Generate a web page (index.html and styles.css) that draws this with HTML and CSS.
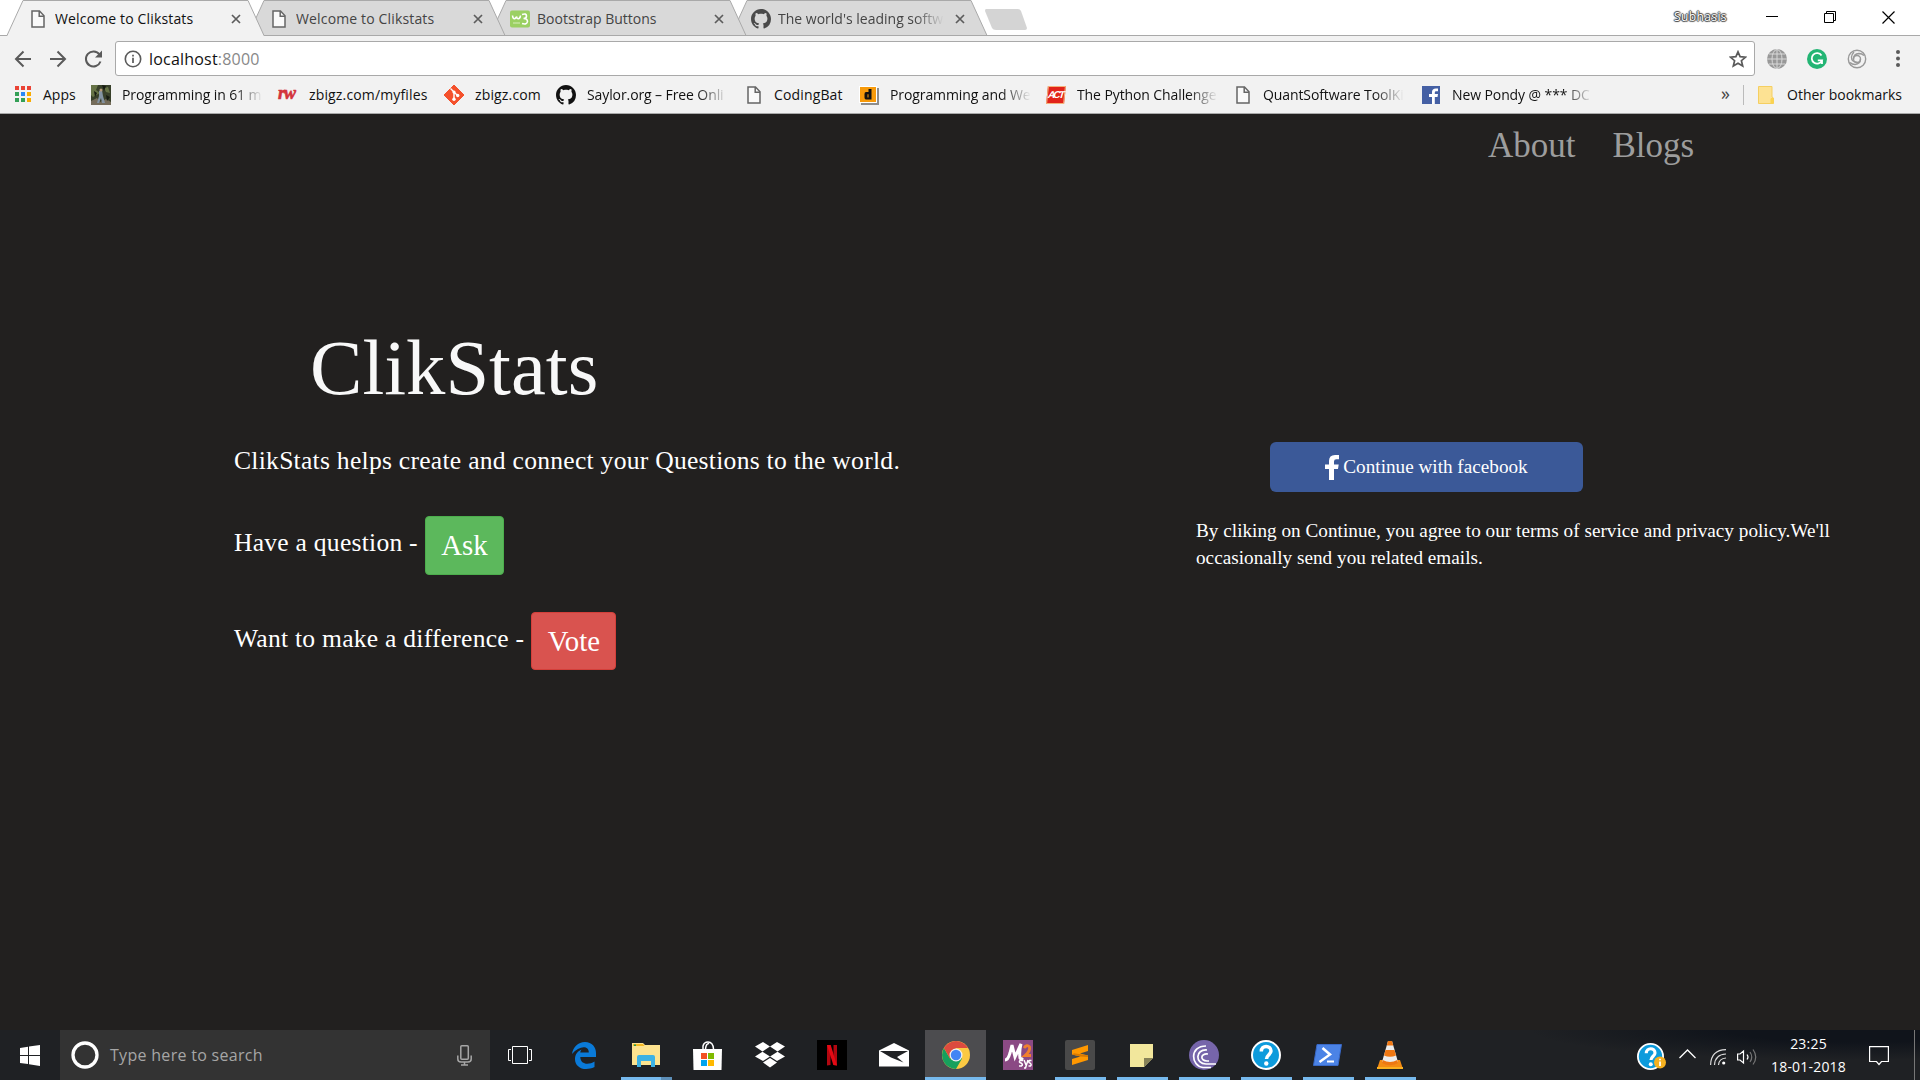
FILE: index.html
```html
<!DOCTYPE html>
<html lang="en">
<head>
<meta charset="utf-8">
<title>Welcome to Clikstats</title>
<link rel="stylesheet" href="styles.css">
</head>
<body>
<svg class="defs" width="0" height="0">
  <symbol id="doc" viewBox="0 0 14 18"><path d="M1 1H8.5L13 5.8V17H1Z" fill="#fafafa" stroke="currentColor" stroke-width="1.5"/><path d="M8.2 1V6.2H13" fill="none" stroke="currentColor" stroke-width="1.5"/></symbol>
  <symbol id="close" viewBox="0 0 10 10"><path d="M1 1L9 9M9 1L1 9" stroke="currentColor" stroke-width="1.7"/></symbol>
  <symbol id="github" viewBox="0 0 16 16"><path fill="currentColor" d="M8 0C3.58 0 0 3.58 0 8c0 3.54 2.29 6.53 5.47 7.59.4.07.55-.17.55-.38 0-.19-.01-.82-.01-1.49-2.01.37-2.53-.49-2.69-.94-.09-.23-.48-.94-.82-1.13-.28-.15-.68-.52-.01-.53.63-.01 1.08.58 1.23.82.72 1.21 1.87.87 2.33.66.07-.52.28-.87.51-1.07-1.78-.2-3.64-.89-3.64-3.95 0-.87.31-1.59.82-2.15-.08-.2-.36-1.02.08-2.12 0 0 .67-.21 2.2.82.64-.18 1.32-.27 2-.27s1.36.09 2 .27c1.53-1.04 2.2-.82 2.2-.82.44 1.1.16 1.92.08 2.12.51.56.82 1.27.82 2.15 0 3.07-1.87 3.75-3.65 3.95.29.25.54.73.54 1.48 0 1.07-.01 1.93-.01 2.2 0 .21.15.46.55.38A8.01 8.01 0 0 0 16 8c0-4.42-3.58-8-8-8z"/></symbol>
  <symbol id="question" viewBox="0 0 30 30"><circle cx="15" cy="15" r="14" fill="#0d9bdc" stroke="#fff" stroke-width="2"/><path d="M10.300 11.500C10.300 4.500 20 5 20 11C20 14.500 15.500 15 15.500 19" fill="none" stroke="#fff" stroke-width="3.500"/><circle cx="15.300" cy="23.500" r="2.200" fill="#fff"/></symbol>
</svg>

<header class="browser">
  <div class="tabstrip">
    <svg class="tab-shapes" width="1040" height="36" viewBox="0 0 1040 36">
      <path d="M731 35.500L747 .5H971L987 35.500Z" fill="#d9d9d9" stroke="#a9a9a9"/>
      <path d="M490 35.500L506 .5H730L746 35.500Z" fill="#d9d9d9" stroke="#a9a9a9"/>
      <path d="M248 35.500L264 .5H489L505 35.500Z" fill="#d9d9d9" stroke="#a9a9a9"/>
      <path d="M0 35.500H1040" stroke="#a9a9a9"/>
      <path d="M7 36L23 .5H248L264 36Z" fill="#f2f2f2"/>
      <path d="M7 35.500L23 .5H248L264 35.500" fill="none" stroke="#a9a9a9"/>
      <path d="M986 9H1018Q1020 9 1021 11L1027 28Q1027 30 1025 30H996Q993 30 992 28L985 11Q985 9 986 9Z" fill="#d4d4d4"/>
    </svg>
    <div class="tabs">
      <div class="tab active"><svg class="tab-icon doc-icon"><use href="#doc"/></svg><span class="tab-title airy">Welcome to Clikstats</span><svg class="tab-close"><use href="#close"/></svg></div>
      <div class="tab"><svg class="tab-icon doc-icon"><use href="#doc"/></svg><span class="tab-title airy">Welcome to Clikstats</span><svg class="tab-close"><use href="#close"/></svg></div>
      <div class="tab"><svg class="tab-icon wide" viewBox="0 0 20 17"><rect width="20" height="17" rx="2" fill="#9bd063"/><path d="M2.500 5Q3 9 5 8Q6.500 7 6.500 6Q7 9 9 8Q10.500 7 10.500 5M12 4Q16.500 2.500 16.500 5.500Q16.500 8 13.500 8Q17.500 8 17.500 11Q17 14.500 12 13" fill="none" stroke="#fff" stroke-width="1.600"/><path d="M3 12.500H10" stroke="#d7efbc"/></svg><span class="tab-title">Bootstrap Buttons</span><svg class="tab-close"><use href="#close"/></svg></div>
      <div class="tab"><svg class="tab-icon wide gh"><use href="#github"/></svg><span class="tab-title fade">The world's leading software</span><svg class="tab-close"><use href="#close"/></svg></div>
    </div>
    <div class="window-controls">
      <span class="profile">Subhasis</span>
      <svg width="12" height="12"><path d="M0 5.500H12" stroke="#000"/></svg>
      <svg width="12" height="12"><path d="M.5 2.500H9.500V11.500H.5ZM2.500 2V.5H11.500V9.500H10" fill="none" stroke="#000"/></svg>
      <svg width="13" height="13"><path d="M.5 .5L12.500 12.500M12.500 .5L.5 12.500" stroke="#000" stroke-width="1.200"/></svg>
    </div>
  </div>

  <div class="toolbar">
    <svg class="nav-icons" width="107" height="34" viewBox="0 0 107 34" fill="none" stroke="#5a5a5a" stroke-width="2">
      <path d="M31 17H16M23.500 9.500L16 17L23.500 24.500M50 17H65M57.500 9.500L65 17L57.500 24.500"/>
      <path d="M99.500 12.500A7.500 7.500 0 1 0 100.500 19.500"/><path d="M102 8.500V15.500H95Z" fill="#5a5a5a" stroke="none"/>
    </svg>
    <div class="omnibox">
      <svg width="18" height="18" viewBox="0 0 18 18"><circle cx="9" cy="9" r="7.700" fill="none" stroke="#5a5a5a" stroke-width="1.600"/><path d="M9 7.700V13M9 4.800V6.500" stroke="#5a5a5a" stroke-width="1.700"/></svg>
      <span class="url">localhost<span class="port">:8000</span></span>
      <svg class="star" width="18" height="18" viewBox="0 0 18 18"><path d="M9 1.800L11.100 6.600L16.500 7.100L12.400 10.700L13.700 16L9 13.200L4.300 16L5.600 10.700L1.500 7.100L6.900 6.600Z" fill="none" stroke="#5a5a5a" stroke-width="1.700"/></svg>
    </div>
    <div class="extensions">
      <svg width="20" height="20" viewBox="0 0 20 20"><circle cx="10" cy="10" r="10" fill="#989898"/><g fill="none" stroke="#d8d8d8" stroke-width="1"><ellipse cx="10" cy="10" rx="5" ry="9.500"/><path d="M10 0V20M0 10H20M2 5H18M2 15H18"/></g></svg>
      <svg width="20" height="20" viewBox="0 0 20 20"><circle cx="10" cy="10" r="10" fill="#23b574"/><path d="M14.500 6.500A5.300 5.300 0 1 0 15 11.300H10.800M15 11.300V15" fill="none" stroke="#fff" stroke-width="1.800"/></svg>
      <svg width="20" height="20" viewBox="0 0 20 20" fill="none" stroke="#999" stroke-width="1.400"><circle cx="10" cy="10" r="8.700"/><circle cx="10" cy="10" r="3.500"/><path d="M6.500 10Q6.500 5 12 4.500Q15 4.500 17 6.500M13.500 10Q13.500 15 8 15.500Q5 15.500 3 13.500M10 13.500Q4.500 13 4.500 8Q5 5 7 3"/></svg>
      <svg width="4" height="17" viewBox="0 0 4 17" fill="#5a5a5a"><circle cx="2" cy="2" r="2"/><circle cx="2" cy="8.500" r="2"/><circle cx="2" cy="15" r="2"/></svg>
    </div>
  </div>

  <div class="bookmarks">
    <div class="bm apps"><svg viewBox="0 0 20 20"><g fill="#ea4335"><path d="M0 1h4v4H0zM6 1h4v4H6zM12 1h4v4h-4z"/></g><path d="M0 7h4v4H0zM0 13h4v4H0zM6 13h4v4H6z" fill="#34a057"/><path d="M6 7h4v4H6z" fill="#2a87f5"/><path d="M12 7h4v4h-4zM12 13h4v4h-4z" fill="#f9ab00"/></svg><span>Apps</span></div>
    <div class="bm fade"><svg viewBox="0 0 20 20"><path d="M0 0H20V20H0Z" fill="#38402a"/><path d="M0 0H7L5 5L9 8L2 12L0 10ZM13 3L17 2L19 8L15 7Z" fill="#667346"/><path d="M0 16L6 13L9 17L15 14L20 17V20H0Z" fill="#756d5b"/><path d="M11 0L15 1L13 6ZM3 6L6 8L4 12ZM15 10L19 12L16 16Z" fill="#171b12"/><path d="M8 6L11 5L12 11L14 18H11L10 13L8 18H6L8 11Z" fill="#8393a2"/><circle cx="10" cy="5" r="1.500" fill="#b69a7a"/></svg><span>Programming in 61 m</span></div>
    <div class="bm"><i class="rw">rw</i><span class="airy">zbigz.com/myfiles</span></div>
    <div class="bm"><svg viewBox="0 0 20 20"><path d="M10 0L20 10L10 20L0 10Z" fill="#f4512c" stroke="#f4512c" stroke-linejoin="round"/><path d="M6.500 3.500L10 7V14M10 7L13.500 10.500" fill="none" stroke="#fff" stroke-width="1.400"/><g fill="#fff"><circle cx="10" cy="7" r="1.600"/><circle cx="10" cy="14.300" r="1.700"/><circle cx="13.700" cy="10.500" r="1.700"/></g></svg><span class="airy">zbigz.com</span></div>
    <div class="bm fade gh-dark"><svg><use href="#github"/></svg><span>Saylor.org – Free Onli</span></div>
    <div class="bm doc-bm"><svg><use href="#doc"/></svg><span class="airy">CodingBat</span></div>
    <div class="bm fade"><svg viewBox="0 0 20 20"><path d="M2 3H20V20H2Z" fill="#8d8d8d"/><path d="M0 1H18V18H0Z" fill="#fff"/><path d="M1 2H17V17H1Z" fill="#f79a0a"/><path d="M9.500 4H12.500V14.500H9.500ZM9.500 7H7Q5.500 7 5.500 9V12.500Q5.500 14.500 7 14.500H9.500V12.500H8.500V9.200H9.500Z" fill="#111"/></svg><span>Programming and We</span></div>
    <div class="bm fade"><i class="act">ACT</i><span>The Python Challenge</span></div>
    <div class="bm fade doc-bm"><svg><use href="#doc"/></svg><span>QuantSoftware ToolKi</span></div>
    <div class="bm fade"><svg viewBox="0 0 20 20"><path d="M1 1H19V19H1Z" fill="#4560a4"/><path d="M11 19V12H8V9H11V7Q11 3.500 15 3.500H17V6.200H15Q13.800 6.200 13.800 7.500V9H17L16.500 12H13.800V19Z" fill="#fff"/></svg><span>New Pondy @ *** DC</span></div>
    <div class="more">»</div>
    <div class="bm other"><svg viewBox="0 0 20 20"><path d="M2.500 1.500H16V12L17.500 13V18.500H2.500Z" fill="#fde293" stroke="#f5cf61"/><path d="M14.500 18.500V14Q16 11.500 17.500 14V18.500Z" fill="#fbd44f"/></svg><span>Other bookmarks</span></div>
  </div>
</header>

<main class="page">
  <nav class="site-nav"><a>About</a><a>Blogs</a></nav>
  <div class="columns">
    <section class="intro">
      <h1>ClikStats</h1>
      <p class="lead">ClikStats helps create and connect your Questions to the world.</p>
      <div class="action"><span>Have a question -</span><button class="btn ask">Ask</button></div>
      <div class="action second"><span>Want to make a difference -</span><button class="btn vote">Vote</button></div>
    </section>
    <section class="signin">
      <button class="fb"><svg width="14" height="25" viewBox="0 0 14 25"><path d="M4 25V14H0V9.500H4V6Q4 0 10 0H14V4.300H11.300Q9 4.300 9 6.500V9.500H13.700L13 14H9V25Z" fill="#fff"/></svg><span>Continue with facebook</span></button>
      <p class="terms">By cliking on Continue, you agree to our terms of service and privacy policy.We'll<br>occasionally send you related emails.</p>
    </section>
  </div>
</main>

<footer class="taskbar">
  <div class="start"><svg width="20" height="21" viewBox="0 0 20 21" fill="#fff"><path d="M0 3L8 1.800V10H0ZM9 1.600L20 0V10H9ZM0 11H8V19L0 18ZM9 11H20V21L9 19.300Z"/></svg></div>
  <div class="search">
    <svg width="28" height="28"><circle cx="14" cy="14" r="12" fill="none" stroke="#fff" stroke-width="3.300"/></svg>
    <span>Type here to search</span>
    <svg class="mic" width="15" height="21" viewBox="0 0 15 21" fill="none" stroke="#a6a6a6" stroke-width="1.500"><rect x="3.800" y=".8" width="7.500" height="13.500" rx="1"/><path d="M.8 10.500V14Q.8 17 4 17H11Q14.200 17 14.200 14V10.500M7.500 17V20M4 20H11"/></svg>
  </div>
  <div class="app taskview"><svg width="24" height="18" fill="none" stroke="#fff"><path d="M4.500 .5H19.500V17.500H4.500ZM3 3.500H.5V14.500H3M21 3.500H23.500V14.500H21"/></svg></div>
  <div class="app"><svg width="24" height="27" viewBox="0 0 24 27"><path d="M0 12C1 5 6 0 13 0C20 0 24 5 24 11V15H8.300C8.500 23 17 23 22.500 19.500V25C12 30 2.500 25 3 16.500C3.200 12 6 9 9.500 7.500C8.600 8.700 8.300 10 8.300 10.500H16.800C16.800 3 7 3.500 0 12Z" fill="#0a7ad8"/></svg></div>
  <div class="app run multi"><svg width="28" height="24" viewBox="0 0 28 24"><path d="M0 0H11L13 2H28V22H0Z" fill="#fde38f"/><path d="M1 1H11L12.500 3H1Z" fill="#f5b921"/><path d="M2 1.500H4V3H2Z" fill="#1f9a55"/><path d="M5 24V14Q5 12 7 12H21Q23 12 23 14V24H19V18H9V24Z" fill="#3db2e4"/></svg></div>
  <div class="app"><svg width="29" height="29" viewBox="0 0 29 29"><path d="M10 8V5Q11 1 15 1Q20 1 20.500 8M12.500 8Q13 2.500 16 2.500" fill="none" stroke="#fff" stroke-width="1.500"/><path d="M0 8H29L28.500 29H.5Z" fill="#fff"/><path d="M8 12H14V18H8Z" fill="#f25022"/><path d="M15 12H21V18H15Z" fill="#7fba00"/><path d="M8 19H14V25H8Z" fill="#00a4ef"/><path d="M15 19H21V25H15Z" fill="#ffb900"/></svg></div>
  <div class="app"><svg width="30" height="26" viewBox="0 0 30 26" fill="#fff"><path d="M8 0L15 4.500L7.500 9.500L0 4.500ZM22 0L30 4.500L22.500 9.500L15 4.500ZM7.500 9.700L15 14.500L8 19L0 14.500ZM22.500 9.700L30 14.500L22 19L15 14.500ZM15 16L22 20.500L15 25.500L8 20.500Z"/></svg></div>
  <div class="app"><svg width="30" height="30"><path d="M0 0H30V30H0Z"/><path d="M10 5H13.500V25L10 25.500ZM16.500 5H20V25.500L16.500 25Z" fill="#b20710"/><path d="M10 5H13.700L20 25.500L16.300 25Z" fill="#e50914"/></svg></div>
  <div class="app mail"><svg width="30" height="24" viewBox="0 0 30 24"><path d="M0 7.500L15 0L30 7.500V23.500H0Z" fill="#fff"/><path d="M1 8H29L18 14L24.500 19.500L12 14.500Z" fill="#202225"/></svg></div>
  <div class="app run current"><svg width="28" height="28" viewBox="0 0 28 28"><circle cx="14" cy="14" r="14" fill="#fbc943"/><path d="M14 14L20 17.500L14 28A14 14 0 0 1 1.900 7L8 17.500Z" fill="#17a05d"/><path d="M1.900 7A14 14 0 0 1 26.100 7H14L8 17.500Z" fill="#dc4b3f"/><circle cx="14" cy="14" r="6.500" fill="#f1f1f1"/><circle cx="14" cy="14" r="5.200" fill="#4285f4"/></svg></div>
  <div class="app"><svg width="30" height="30" viewBox="0 0 30 30"><path d="M0 0H30V30H0Z" fill="#8b4a84"/><path d="M2 20Q5 20 7 13L9 5L12 17L18 4Q16 12 17 18Q18 20 20 18" fill="none" stroke="#fff" stroke-width="3"/><path d="M21 8Q24 4 26.500 7Q27.500 11 22 15.500H28" fill="none" stroke="#f07f2e" stroke-width="2.800"/><path d="M20 20.500H17Q15.500 22.500 18 23Q20.500 24.500 18.500 26H16M21 20L23 25M25 20L22.500 28H21M28.500 20.500H26.500Q25 22.500 27 23Q29 24.500 27.500 26H25.500" fill="none" stroke="#fff" stroke-width="1.500"/></svg></div>
  <div class="app run"><svg width="30" height="30"><rect width="30" height="30" rx="2" fill="#494949"/><path d="M7 10L23 5V11L15 13.500L23 15.500V20L7 25V19L15.500 16.500L7 14.500Z" fill="#ff9800"/><path d="M7 14.500L9 13.200L23 15.500V17L15.500 16.500Z" fill="#d97900"/></svg></div>
  <div class="app run"><svg width="23" height="23"><path d="M0 0H23V14L14 23H0Z" fill="#f2e79c"/><path d="M14 14H23L14 23Z" fill="#868158"/></svg></div>
  <div class="app run"><svg width="30" height="30" viewBox="0 0 30 30"><circle cx="15" cy="15" r="15" fill="#7665aa"/><g fill="none" stroke="#fff" stroke-width="1.700"><path d="M17 6C0 6 2 26 14 27.500H22M18 10C6 9 6 24 17 24H27M19 14C11 13 11 21 18 21H20"/></g></svg></div>
  <div class="app run"><svg width="30" height="30"><use href="#question"/></svg></div>
  <div class="app run"><svg width="29" height="22" viewBox="0 0 29 22"><path d="M4 .5H28.500L25 21.500H.5Z" fill="#4b83e6" stroke="#3868c6"/><path d="M9.500 4L17 10.500L6.500 18" fill="none" stroke="#fff" stroke-width="2.500"/><path d="M14 17.500H21" stroke="#fff" stroke-width="2"/></svg></div>
  <div class="app run"><svg width="26" height="28" viewBox="0 0 26 28"><path d="M3 19H23L26 28H0Z" fill="#f48b13"/><path d="M11 0H15L21 21Q13 26 5 21Z" fill="#ececec"/><path d="M11 0H15L16.300 4.500H9.700ZM8.500 9H17.500L19 14.500Q13 17 7 14.500ZM5.700 19L5 22Q13 26.500 21 22L20.300 19Q13 23 5.700 19Z" fill="#ee7712"/><path d="M0 26H26V28H0Z" fill="#fbb01f"/></svg></div>
  <div class="tray">
    <svg width="29" height="27" viewBox="0 0 29 27"><svg width="27" height="27"><use href="#question"/></svg><circle cx="23" cy="19.500" r="6" fill="#f5b120"/><path d="M23 18.500V23M23 15.800V17.300" stroke="#fff" stroke-width="1.800"/></svg>
    <svg class="chev" width="17" height="10"><path d="M.5 9L8.500 1L16.500 9" fill="none" stroke="#fff" stroke-width="1.300"/></svg>
    <svg class="wifi" width="16" height="16" viewBox="0 0 16 16" fill="none" stroke="#ddd" stroke-width="1.200"><path d="M.6 16Q1 1 16 .7M4.500 16Q5 5.500 16 5M8.500 16Q9 9.500 16 9"/><circle cx="13.700" cy="14" r="1.600" fill="#fff" stroke="none"/></svg>
    <svg class="vol" width="20" height="18" viewBox="0 0 20 18" fill="none" stroke="#fff" stroke-width="1.200"><path d="M.6 6H3L6.500 3V15L3 12H.6ZM10 6.500Q12 9 10 11.500"/><path d="M13 4Q16.500 9 13 14M16 1.500Q21.500 9 16 16.500" stroke="#777"/></svg>
    <div class="clock"><span class="time">23:25</span><span class="date">18-01-2018</span></div>
    <svg class="note" width="20" height="20" viewBox="0 0 20 20"><path d="M.6 .6H19.400V15.500H12.500L10 18.500L7.500 15.500H.6Z" fill="none" stroke="#fff" stroke-width="1.200"/></svg>
  </div>
</footer>
</body>
</html>
```
FILE: styles.css
```css
* { box-sizing: border-box; }
body { margin: 0; width: 1920px; height: 1080px; overflow: hidden; display: flex; flex-direction: column; background: #22201f; font-family: "Open Sans", "Noto Sans", sans-serif; }
svg { display: block; flex: none; }
.defs { position: absolute; }

.browser { height: 114px; flex: none; background: #f2f2f2; border-bottom: 1px solid #a9a9a9; }
.tabstrip { height: 36px; display: flex; position: relative; background: #fff; border-bottom: 1px solid #a9a9a9; }
.tab-shapes { position: absolute; left: 0; top: 0; }
.tabs { position: relative; display: flex; padding-left: 31px; }
.tab { width: 241px; height: 36px; display: flex; align-items: center; padding-top: 2px; color: #444; font-size: 14px; }
.active { color: #111; }
.tab-icon { width: 20px; height: 20px; margin-right: 4px; color: #777; }
.doc-icon { width: 14px; height: 18px; margin-right: 10px; color: #666; }
.wide { margin-left: -3px; margin-right: 7px; width: 20px; height: 18px; color: #4a4a4a; }
.gh { height: 20px; }
.tab-title { width: 166px; letter-spacing: 0; white-space: nowrap; overflow: hidden; padding-bottom: 2px; }
.tab-title.airy { letter-spacing: 0.15px; }
.tab-close { width: 10px; height: 10px; margin-left: 10px; color: #5c5c5c; }
.tab:not(.active) .tab-close { margin-left: 11px; }
.fade span, .tab-title.fade { overflow: hidden; -webkit-mask-image: linear-gradient(90deg, #000 calc(100% - 30px), transparent); mask-image: linear-gradient(90deg, #000 calc(100% - 30px), transparent); }
.window-controls { flex: 1; display: flex; justify-content: flex-end; align-items: center; gap: 46px; padding-right: 25px; padding-bottom: 1px; }
.profile { font-size: 12px; letter-spacing: 0.4px; color: #fff; text-shadow: 0 0 1px #333, 1px 0 1px #444, -1px 0 1px #444, 0 1px 1px #444, 0 -1px 1px #444; margin-right: -7px; padding-bottom: 1px; }

.toolbar { display: flex; align-items: center; height: 44px; padding: 1px 19px 0 8px; }
.nav-icons { margin-left: -8px; margin-right: 8px; }
.omnibox { width: 1640px; height: 35px; background: #fff; border: 1px solid #a9a9a9; border-radius: 3px; display: flex; align-items: center; padding: 0 7px 0 8px; gap: 7px; }
.url { font-size: 16px; color: #111; letter-spacing: 0.2px; }
.port { color: #888; }
.star { margin-left: auto; }
.extensions { display: flex; align-items: center; gap: 20px; margin-left: 12px; }
.extensions svg:last-child { margin-left: 9px; }

.bookmarks { display: grid; grid-template-columns: 76px 187px 166px 112px 188px 115px 187px 187px 188px 300px 22px 1fr; height: 30px; align-items: center; padding: 0 0 0 15px; }
.bm { display: flex; align-items: center; font-size: 14px; color: #111; white-space: nowrap; }
.bm span { padding-bottom: 2px; }
.bm span.airy { letter-spacing: 0.15px; }
.bm svg { width: 20px; height: 20px; margin-right: 11px; }
.bm.apps svg { margin-right: 8px; }
.bm.doc-bm svg { width: 14px; height: 18px; margin: 0 13px 0 3px; color: #666; }
.gh-dark { color: #111; }
.bm.fade span { width: 141px; letter-spacing: -0.1px; }
.rw { width: 20px; height: 20px; margin-right: 11px; font: italic 900 18px/16px "Liberation Serif", serif; color: #d3333b; letter-spacing: -1px; -webkit-text-stroke: 0.6px #d3333b; }
.act { width: 18px; height: 18px; margin: 0 12px 0 1px; background: #e2231a; color: #fff; font: italic bold 10px/16px "Liberation Sans", sans-serif; letter-spacing: -1.8px; transform: skewX(-6deg); border: 1px solid #f3b27a; }
.more { font-size: 18px; color: #444; padding-bottom: 4px; }
.other { border-left: 1px solid #bbb; height: 20px; padding-left: 12px; }

.page { flex: 1; display: flex; flex-direction: column; font-family: "Liberation Serif", serif; color: #fff; }
.site-nav { display: flex; gap: 37px; padding: 12px 0 0 1488px; font-size: 35px; line-height: 40px; color: #9d9d9d; }
.columns { display: flex; }
.intro { width: 1196px; padding: 156px 0 0 234px; flex: none; }
h1 { margin: 0 0 0 76px; font-size: 78.6px; font-weight: 400; line-height: 92px; color: #f8f8f8; }
.lead { margin: 31px 0 0; font-size: 25.6px; line-height: 32px; letter-spacing: 0.26px; white-space: nowrap; }
.action { display: flex; align-items: flex-start; gap: 7px; margin-top: 39px; font-size: 25.6px; line-height: 32px; }
.action span { padding-top: 11px; letter-spacing: 0.24px; }
.btn { font: 28.8px/43px "Liberation Serif", serif; color: #fff; height: 59px; padding: 7px 15px; border-radius: 4px; border: 1px solid; }
.ask { background: #5cb85c; border-color: #4cae4c; width: 79px; }
.vote { background: #d9534f; border-color: #d43f3a; width: 85px; height: 58px; }
.action.second { margin-top: 37px; }
.signin { padding-top: 276px; }
.fb { width: 313px; height: 50px; margin-left: 74px; display: flex; align-items: center; justify-content: center; gap: 4px; border: 0; border-radius: 6px; background: #3b5998; color: #fff; font: 19.2px "Liberation Serif", serif; }
.fb span { white-space: nowrap; }
.terms { margin: 25px 0 0; font-size: 19.2px; line-height: 27px; letter-spacing: 0.02px; white-space: nowrap; }

.taskbar { height: 50px; flex: none; display: flex; background: radial-gradient(ellipse 330px 30px at 1860px 0, #10141b 40%, transparent) #1f2124; color: #fff; }
.start { width: 60px; display: grid; place-items: center; }
.search { width: 430px; background: #333; display: flex; align-items: center; padding: 0 18px 0 11px; gap: 11px; font-size: 16px; letter-spacing: 0.3px; color: #a6a6a6; }
.mic { margin-left: auto; }
.app { width: 61px; margin-right: 1px; display: flex; justify-content: center; align-items: center; position: relative; }
.taskview { width: 60px; margin-right: 3px; }
.run::after { content: ""; position: absolute; left: 6px; right: 4px; bottom: 0; height: 3px; background: #76b9ed; }
.multi::after { background: linear-gradient(90deg, #76b9ed 40px, #5d8fb8 40px); }
.current { background: #4c4c4f; }
.current::after { left: 0; right: 0; }
.tray { margin-left: auto; display: flex; align-items: center; width: 278px; border-right: 1px solid #777; margin-right: 5px; padding-top: 3px; }
.tray svg { margin-right: 13px; }
.tray .chev { margin-top: -6px; margin-right: 14px; }
.tray .wifi { margin-right: 11px; }
.tray .vol { margin-right: 13px; }
.clock { width: 77px; display: flex; flex-direction: column; align-items: center; font-size: 14px; letter-spacing: 0.2px; line-height: 23px; margin-top: -3px; }
.clock span { white-space: nowrap; }
.tray .note { margin-left: 22px; margin-right: 0; margin-top: -2px; }
```
